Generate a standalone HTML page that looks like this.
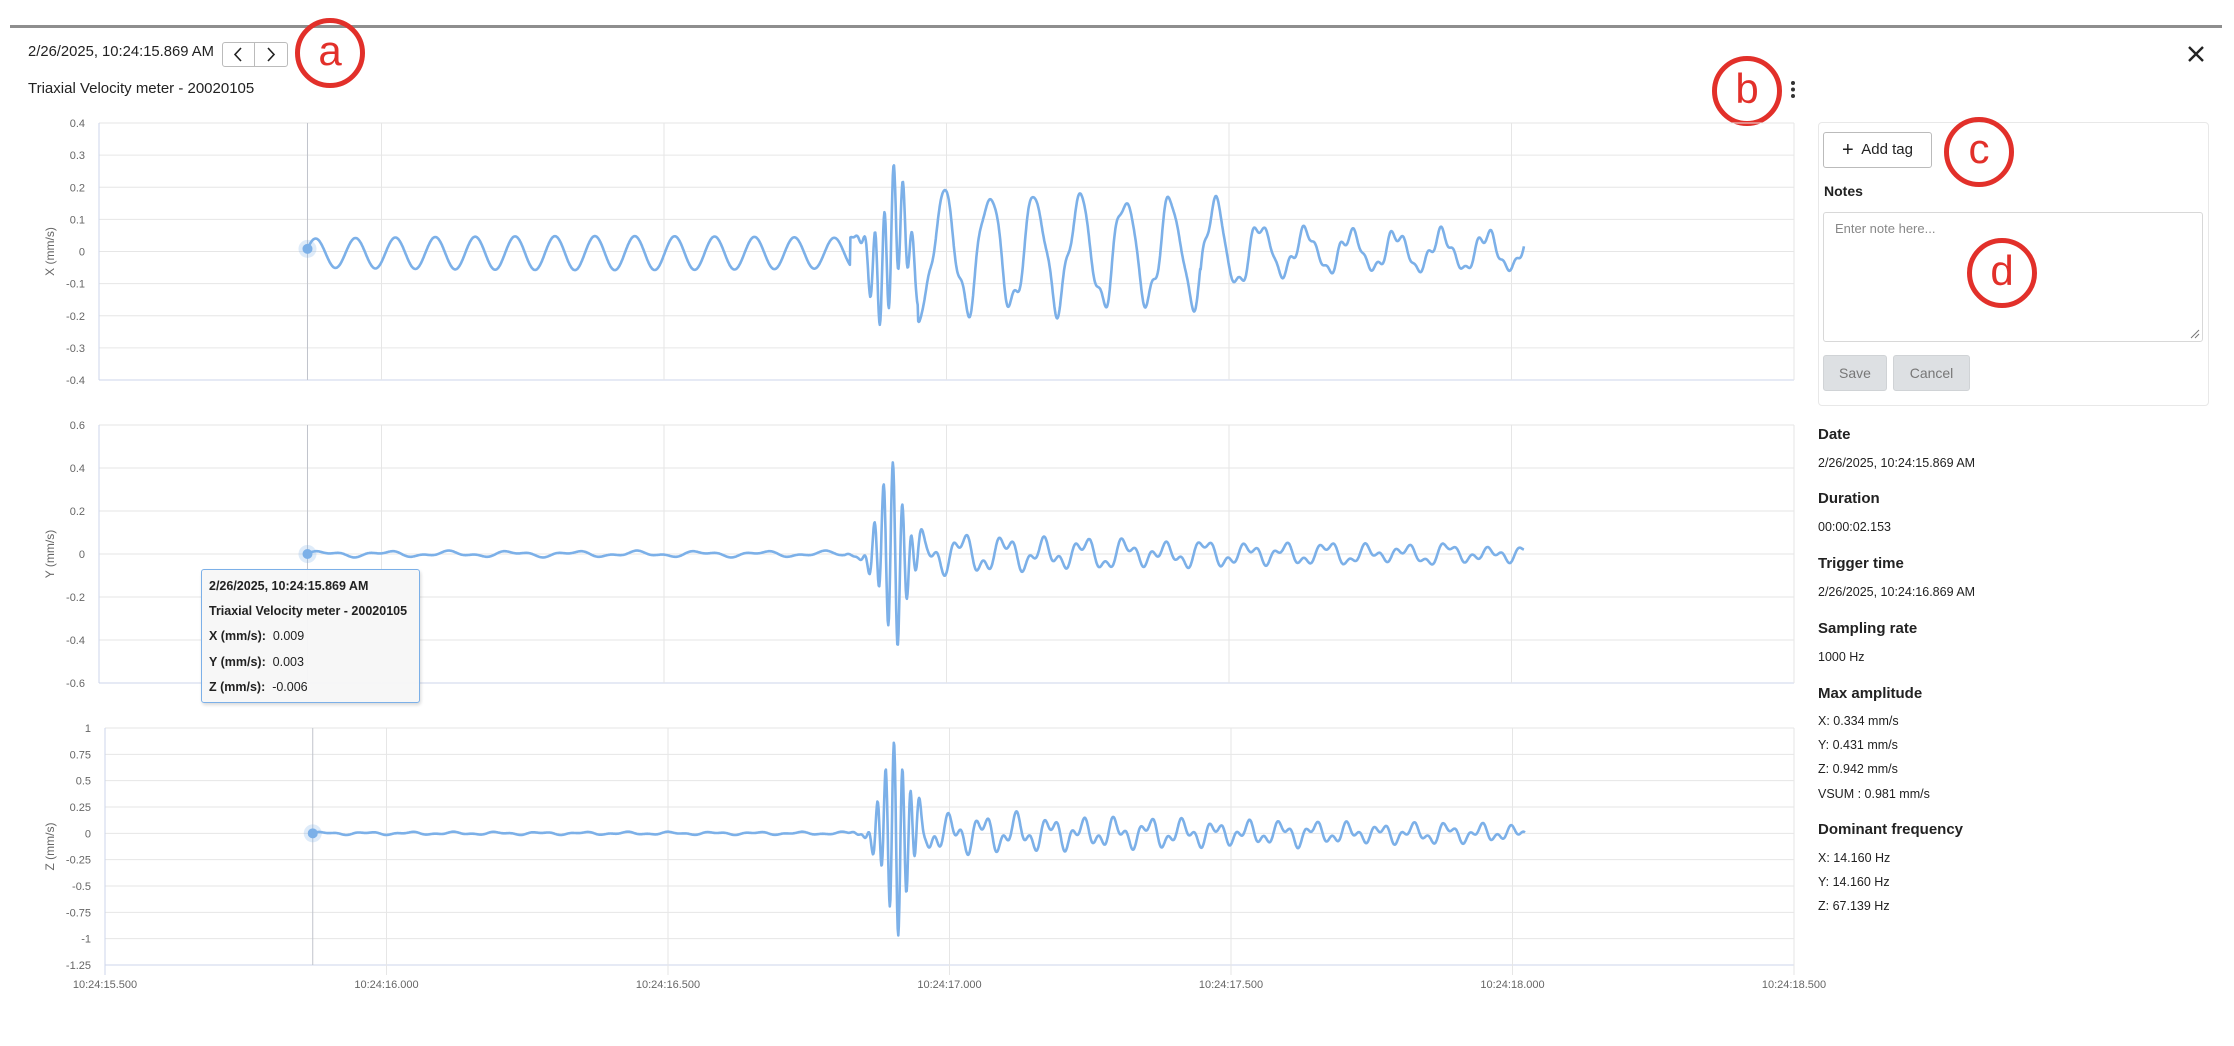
<!DOCTYPE html>
<html><head><meta charset="utf-8">
<style>
*{margin:0;padding:0;box-sizing:border-box}
body{width:2234px;height:1046px;background:#fff;position:relative;overflow:hidden;font-family:"Liberation Sans",sans-serif;color:#222}
.a{position:absolute}
.circ{position:absolute;border:5px solid #e2302a;border-radius:50%;color:#e2302a;font-family:"Liberation Sans",sans-serif;font-size:42px;text-align:center;line-height:56px}
.lbl{position:absolute;left:1818px;font-size:15px;font-weight:bold;color:#222}
.val{position:absolute;left:1818px;font-size:12.5px;color:#222}
.btn{position:absolute;border:1px solid #c8c8c8;border-radius:3px;font-size:15px;text-align:center}
</style></head><body>
<div class="a" style="left:10px;top:25px;width:2212px;height:3px;background:#8e8e8e"></div>
<div class="a" style="left:28px;top:44px;font-size:14.8px;color:#222">2/26/2025, 10:24:15.869 AM</div>
<div class="a" style="left:222px;top:42px;width:66px;height:25px;border:1px solid #bbb;border-radius:3px"></div>
<div class="a" style="left:254px;top:42px;width:1px;height:25px;background:#bbb"></div>
<svg class="a" style="left:222px;top:42px" width="66" height="25"><path d="M19 6 L13 12.5 L19 19 M46 6 L52 12.5 L46 19" fill="none" stroke="#222" stroke-width="1.6"/></svg>
<div class="circ" style="left:295px;top:18px;width:70px;height:70px">a</div>
<div class="a" style="left:28px;top:80px;font-size:15px">Triaxial Velocity meter - 20020105</div>
<div class="circ" style="left:1712px;top:56px;width:70px;height:70px">b</div>
<svg class="a" style="left:1788px;top:80px" width="10" height="20"><circle cx="5" cy="3" r="2" fill="#333"/><circle cx="5" cy="9.5" r="2" fill="#333"/><circle cx="5" cy="16" r="2" fill="#333"/></svg>
<svg class="a" style="left:2186px;top:44px" width="20" height="20"><path d="M3 3 L17 17 M17 3 L3 17" stroke="#222" stroke-width="2.4"/></svg>

<svg id="ch" class="a" style="left:0;top:0" width="1860" height="1046"></svg>

<div class="a" style="left:201px;top:569px;width:219px;height:134px;background:rgba(247,247,247,0.97);border:1px solid #7cb0e8;border-radius:3px;box-shadow:1px 2px 3px rgba(0,0,0,0.15);font-size:12.5px;color:#222">
<div style="position:absolute;left:7px;top:9px;font-weight:bold">2/26/2025, 10:24:15.869 AM</div>
<div style="position:absolute;left:7px;top:34px;font-weight:bold">Triaxial Velocity meter - 20020105</div>
<div style="position:absolute;left:7px;top:59px"><b>X (mm/s):</b>&nbsp; 0.009</div>
<div style="position:absolute;left:7px;top:85px"><b>Y (mm/s):</b>&nbsp; 0.003</div>
<div style="position:absolute;left:7px;top:110px"><b>Z (mm/s):</b>&nbsp; -0.006</div>
</div>

<div class="a" style="left:1818px;top:122px;width:391px;height:284px;border:1px solid #e8e8e8;border-radius:4px"></div>
<div class="btn" style="left:1823px;top:132px;width:109px;height:36px;line-height:34px;border-color:#bbb"><span style="font-size:20px;vertical-align:-2px">+</span>&nbsp; Add tag</div>
<div class="circ" style="left:1944px;top:117px;width:70px;height:70px;line-height:54px">c</div>
<div class="a" style="left:1824px;top:183px;font-size:14px;font-weight:bold">Notes</div>
<div class="a" style="left:1823px;top:212px;width:380px;height:130px;border:1px solid #d8d8d8;border-radius:3px"></div>
<div class="a" style="left:1835px;top:221px;font-size:13px;color:#888">Enter note here...</div>
<svg class="a" style="left:2190px;top:329px" width="10" height="10"><path d="M1 9 L9 1 M5 9 L9 5" stroke="#777" stroke-width="1"/></svg>
<div class="circ" style="left:1967px;top:238px;width:70px;height:70px;line-height:56px">d</div>
<div class="btn" style="left:1823px;top:355px;width:64px;height:36px;line-height:34px;background:#dde0e3;border-color:#d0d3d6;color:#777;font-size:14px">Save</div>
<div class="btn" style="left:1893px;top:355px;width:77px;height:36px;line-height:34px;background:#dde0e3;border-color:#d0d3d6;color:#777;font-size:14px">Cancel</div>

<div class="lbl" style="top:426px">Date</div>
<div class="val" style="top:456px">2/26/2025, 10:24:15.869 AM</div>
<div class="lbl" style="top:490px">Duration</div>
<div class="val" style="top:520px">00:00:02.153</div>
<div class="lbl" style="top:555px">Trigger time</div>
<div class="val" style="top:585px">2/26/2025, 10:24:16.869 AM</div>
<div class="lbl" style="top:620px">Sampling rate</div>
<div class="val" style="top:650px">1000 Hz</div>
<div class="lbl" style="top:685px">Max amplitude</div>
<div class="val" style="top:714px">X: 0.334 mm/s</div>
<div class="val" style="top:738px">Y: 0.431 mm/s</div>
<div class="val" style="top:762px">Z: 0.942 mm/s</div>
<div class="val" style="top:787px">VSUM : 0.981 mm/s</div>
<div class="lbl" style="top:821px">Dominant frequency</div>
<div class="val" style="top:851px">X: 14.160 Hz</div>
<div class="val" style="top:875px">Y: 14.160 Hz</div>
<div class="val" style="top:899px">Z: 67.139 Hz</div>

<script>
(function(){
var svg=document.getElementById('ch');var out='';
var P=Math.PI*2;
function chart(o){
 var L=o.left,R=1794,T=o.top,B=o.bottom;
 var ys=(B-T)/(o.max-o.min);
 function Y(v){return T+(o.max-v)*ys;}
 function X(t){return L+(t-15.5)*(R-L)/3;}
 for(var i=0;i<o.ticks.length;i++){var v=o.ticks[i],y=Y(v);
  out+='<line x1="'+L+'" x2="'+R+'" y1="'+y+'" y2="'+y+'" stroke="'+(i==o.ticks.length-1?'#ccd6eb':'#e6e6e6')+'" stroke-width="1"/>';
  out+='<text x="'+(L-14)+'" y="'+(y+4)+'" text-anchor="end" font-size="11" fill="#666" font-family="Liberation Sans">'+o.lab[i]+'</text>';}
 var xl=['10:24:15.500','10:24:16.000','10:24:16.500','10:24:17.000','10:24:17.500','10:24:18.000','10:24:18.500'];
 for(var k=0;k<=6;k++){var x=X(15.5+k*0.5);out+='<line x1="'+x+'" x2="'+x+'" y1="'+T+'" y2="'+(B+(o.xl?10:0))+'" stroke="'+(k==0?'#ccd6eb':'#e6e6e6')+'"/>';
  if(o.xl){out+='<text x="'+x+'" y="'+(B+23)+'" text-anchor="middle" font-size="11" fill="#666" font-family="Liberation Sans">'+xl[k]+'</text>';}}
 var cx=X(15.869);out+='<line x1="'+cx+'" x2="'+cx+'" y1="'+T+'" y2="'+B+'" stroke="#c0c4cc"/>';
 var cy=(T+B)/2;out+='<text transform="translate(54,'+cy+') rotate(-90)" text-anchor="middle" font-size="12" fill="#666" font-family="Liberation Sans">'+o.name+'</text>';
 var d='';
 for(var n=0;n<=2153;n++){var t=15.869+n*0.001;var v=o.f(t);d+=(n?'L':'M')+X(t).toFixed(1)+' '+Y(v).toFixed(1);}
 out+='<path d="'+d+'" fill="none" stroke="#7cb0e8" stroke-width="2.6" stroke-linejoin="round"/>';
 var y0=Y(o.f(15.869));out+='<circle cx="'+cx+'" cy="'+y0+'" r="9" fill="rgba(124,176,232,0.25)"/><circle cx="'+cx+'" cy="'+y0+'" r="5" fill="#7cb0e8"/>';
}
function g(t,c,w){return Math.exp(-Math.pow((t-c)/w,2));}
chart({left:99,top:123,bottom:380,max:0.4,min:-0.4,ticks:[0.4,0.3,0.2,0.1,0,-0.1,-0.2,-0.3,-0.4],lab:['0.4','0.3','0.2','0.1','0','-0.1','-0.2','-0.3','-0.4'],name:'X (mm/s)',
 f:function(t){var s=t-15.869;var v;
  if(t<16.83){v=-0.005+(0.045+0.008*Math.sin(s*3))*Math.sin(P*14.16*s+0.3);}
  else{var A;
   if(t<16.95)A=0.05+0.1*(t-16.83)/0.12;
   else if(t<17.45)A=0.2-0.03*(t-16.95)/0.5;
   else A=0.17*Math.exp(-(t-17.45)/0.06)+0.06;
   v=A*(0.9*Math.sin(P*12.5*s+1)+0.15*Math.sin(P*33*s))+0.2*g(t,16.9,0.035)*Math.sin(P*60*s)+0.015*Math.sin(P*45*s);}
  return v;}});
chart({left:99,top:425,bottom:683,max:0.6,min:-0.6,ticks:[0.6,0.4,0.2,0,-0.2,-0.4,-0.6],lab:['0.6','0.4','0.2','0','-0.2','-0.4','-0.6'],name:'Y (mm/s)',
 f:function(t){var s=t-15.869;
  var v=0.01*Math.sin(P*9*s)+0.006*Math.sin(P*21*s);
  if(t>16.82){var A=0.05*Math.exp(-(t-16.95)/0.6)+0.02;if(t<16.95)A*= (t-16.82)/0.13;
   v+=A*(Math.sin(P*14*s)+0.6*Math.sin(P*37*s))+0.4*g(t,16.905,0.03)*Math.sin(P*60*s+0.5);}
  return v;}});
chart({left:105,top:728,bottom:965,max:1,min:-1.25,ticks:[1,0.75,0.5,0.25,0,-0.25,-0.5,-0.75,-1,-1.25],lab:['1','0.75','0.5','0.25','0','-0.25','-0.5','-0.75','-1','-1.25'],name:'Z (mm/s)',xl:true,
 f:function(t){var s=t-15.869;
  var v=0.01*Math.sin(P*13*s)+0.006*Math.sin(P*29*s);
  if(t>16.82){var A=0.1*Math.exp(-(t-16.95)/0.7)+0.035;if(t<16.95)A*=(t-16.82)/0.13;
   v+=A*(Math.sin(P*17*s)+0.7*Math.sin(P*41*s))+0.85*g(t,16.905,0.03)*Math.sin(P*67*s+0.5);}
  return v;}});
svg.innerHTML=out;
})();
</script>
</body></html>
